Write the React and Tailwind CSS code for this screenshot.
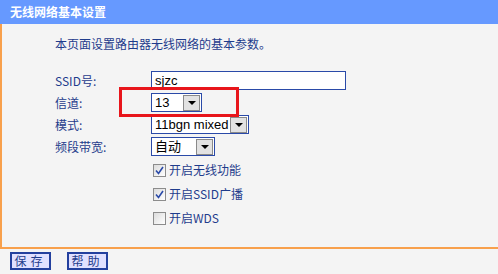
import React from "react";

const font = { fontFamily: '"Noto Sans CJK SC", "Liberation Sans", sans-serif' };

function Select({ value, width }) {
    return (
        <div className={`relative flex h-[19px] items-center border border-[#2a4aa8] bg-white ${width}`}>
            <span className="flex-1 pl-[3px] font-['Liberation_Sans','Noto_Sans_CJK_SC',sans-serif] text-[13px] leading-none text-black">
                {value}
            </span>
            <div className="mr-[1px] flex h-[16px] w-[17px] items-center justify-center border border-[#8a8a8a] bg-[#e2e2e2]">
                <div className="h-0 w-0 border-x-[4px] border-t-[4px] border-x-transparent border-t-black" />
            </div>
        </div>
    );
}

function Check({ checked, label }) {
    return (
        <div className="flex h-[24px] items-center">
            <div className="flex h-[13px] w-[13px] items-center justify-center border border-[#8c8c8c] bg-gradient-to-br from-[#dcdcdc] to-white">
                {checked && (
                    <svg width="9" height="9" viewBox="0 0 9 9">
                        <path d="M1 4.5 L3.5 7.5 L8 1" stroke="#2a4aa8" strokeWidth="1.6" fill="none" />
                    </svg>
                )}
            </div>
            <span className="ml-[3px] text-[12px] text-[#1f3c8c]">{label}</span>
        </div>
    );
}

export default function App() {
    const rows = [
        { label: "SSID号:", field: <div className="flex h-[19px] w-[195px] items-center border border-[#2a4aa8] bg-white pl-[3px] font-['Liberation_Sans',sans-serif] text-[13px] text-black">sjzc</div> },
        { label: "信道:", field: <Select value="13" width="w-[51px]" /> },
        { label: "模式:", field: <Select value="11bgn mixed" width="w-[98px]" /> },
        { label: "频段带宽:", field: <Select value="自动" width="w-[64px]" /> },
    ];

    return (
        <div className="flex h-[274px] w-[498px] flex-col bg-[#f4f4f4]" style={font}>
            <div className="flex h-[24px] items-center bg-[#6699ff] pl-[10px] text-[12px] font-bold text-white">
                无线网络基本设置
            </div>

            <div className="relative h-[225px] border-b-2 border-l-2 border-[#f8a04c] pl-[53px]">
                <p className="mt-[13px] text-[12px] leading-[14px] text-[#1f3c8c]">本页面设置路由器无线网络的基本参数。</p>

                <div className="mt-[20px] flex flex-col gap-[3px]">
                    {rows.map((r) => (
                        <div key={r.label} className="flex h-[19px] items-center">
                            <span className="w-[96px] text-[12px] text-[#1f3c8c]">{r.label}</span>
                            {r.field}
                        </div>
                    ))}
                </div>

                <div className="mt-[2px] flex flex-col pl-[98px]">
                    <Check checked label="开启无线功能" />
                    <Check checked label="开启SSID广播" />
                    <Check label="开启WDS" />
                </div>

                {/* red highlight box */}
                <div className="absolute left-[117px] top-[63px] h-[30px] w-[120px] border-[3px] border-[#e8151b]" />
            </div>

            <div className="flex items-center gap-[16px] pl-[10px] pt-[3px]">
                <button className="h-[18px] w-[41px] border-2 border-[#23409e] bg-[#e0e0ff] text-[12px] leading-none tracking-[4px] text-[#1f3c8c]">保存</button>
                <button className="h-[18px] w-[41px] border-2 border-[#23409e] bg-[#e0e0ff] text-[12px] leading-none tracking-[4px] text-[#1f3c8c]">帮助</button>
            </div>
        </div>
    );
}
